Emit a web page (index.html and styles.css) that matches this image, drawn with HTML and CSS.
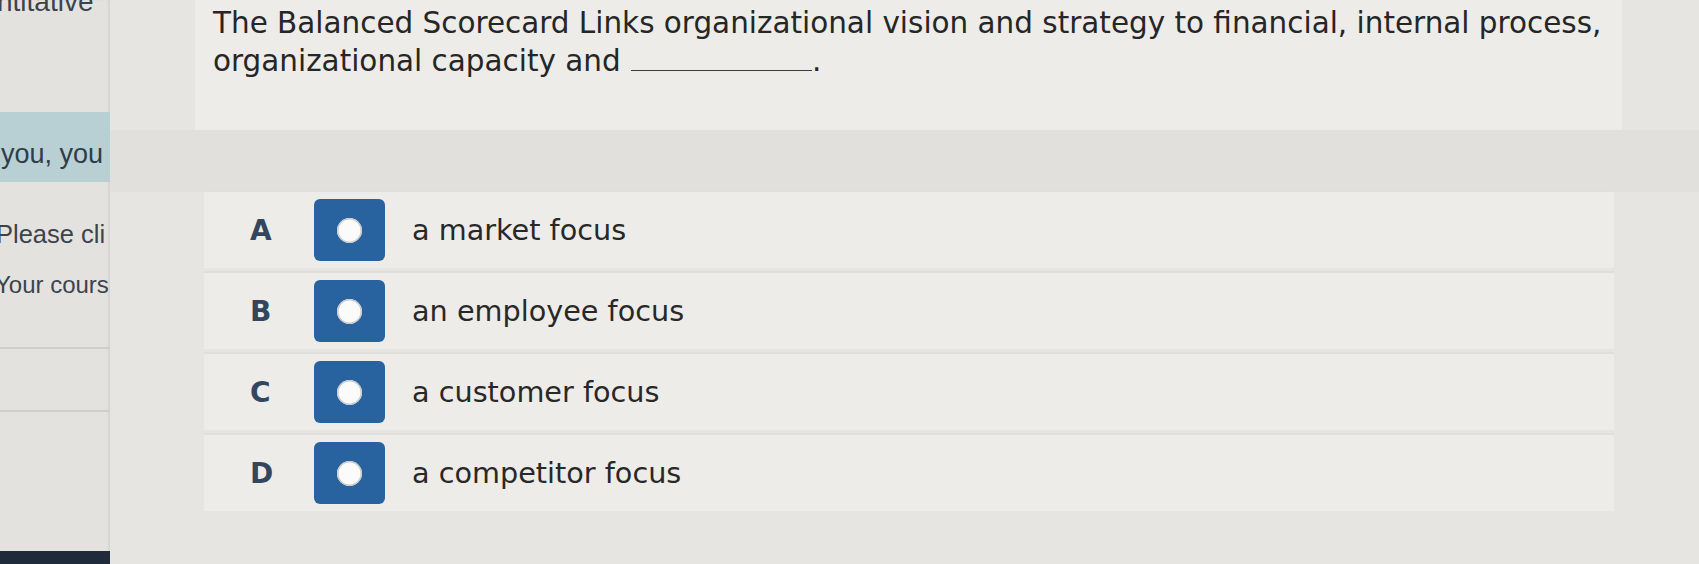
FILE: index.html
```html
<!DOCTYPE html>
<html lang="en">
<head>
<meta charset="utf-8">
<title>Balanced Scorecard question</title>
<link rel="stylesheet" href="styles.css">
</head>
<body>
<div class="app">
  <aside class="sidebar">
    <div class="sb-top">ntitative</div>
    <div class="sb-band"><span class="sb-band-text">you, you</span></div>
    <div class="sb-line sb-please">Please cli</div>
    <div class="sb-line sb-course">Your cours</div>
    <div class="sb-rule sb-rule1"></div>
    <div class="sb-rule sb-rule2"></div>
    <div class="sb-bottom"></div>
  </aside>
  <main class="main">
    <section class="question">
      <p class="q-text">The Balanced Scorecard Links organizational vision and strategy to financial, internal process, organizational capacity and <span class="blank"></span>.</p>
    </section>
    <div class="band"></div>
    <ul class="options">
      <li class="option">
        <span class="opt-letter">A</span>
        <span class="radio"><span class="dot"></span></span>
        <span class="opt-text">a market focus</span>
      </li>
      <li class="option">
        <span class="opt-letter">B</span>
        <span class="radio"><span class="dot"></span></span>
        <span class="opt-text">an employee focus</span>
      </li>
      <li class="option">
        <span class="opt-letter">C</span>
        <span class="radio"><span class="dot"></span></span>
        <span class="opt-text">a customer focus</span>
      </li>
      <li class="option">
        <span class="opt-letter">D</span>
        <span class="radio"><span class="dot"></span></span>
        <span class="opt-text">a competitor focus</span>
      </li>
    </ul>
  </main>
</div>
</body>
</html>
```
FILE: styles.css
```css
html, body {
  margin: 0;
  padding: 0;
}
body {
  width: 1699px;
  height: 564px;
  overflow: hidden;
  background: #e5e4e0;
  font-family: "DejaVu Sans", Verdana, sans-serif;
}
.app {
  display: grid;
  grid-template-columns: 110px 1fr;
  height: 564px;
}

/* Sidebar */
.sidebar {
  display: flex;
  flex-direction: column;
  background: #e3e2de;
  overflow: hidden;
  font-family: "Liberation Sans", Arial, sans-serif;
  color: #3b4350;
  white-space: nowrap;
  box-shadow: inset -2px 0 2px rgba(0,0,0,0.06);
}
.sb-top {
  font-size: 28px;
  line-height: 30px;
  margin-top: -13px;
  margin-left: -3px;
}
.sb-band {
  margin-top: 95px;
  height: 70px;
  background: #b8d0d3;
  display: flex;
  align-items: flex-end;
  padding-bottom: 13px;
  box-sizing: border-box;
}
.sb-band-text {
  font-size: 27px;
  line-height: 30px;
  margin-left: 1px;
  color: #2f3d4a;
}
.sb-line {
  font-size: 25.5px;
  line-height: 30px;
}
.sb-please {
  margin-top: 37px;
  margin-left: -4px;
}
.sb-course {
  margin-top: 21px;
  margin-left: -5px;
  font-size: 24px;
}
.sb-rule {
  height: 2px;
  background: #cfcecb;
}
.sb-rule1 {
  margin-top: 47px;
}
.sb-rule2 {
  margin-top: 61px;
}
.sb-bottom {
  margin-top: auto;
  height: 13px;
  background: #1f2b3b;
}

/* Main */
.main {
  display: flex;
  flex-direction: column;
  background: #e6e5e1;
}
.question {
  margin-left: 85px;
  width: 1427px;
  height: 130px;
  box-sizing: border-box;
  padding: 4px 10px 0 18px;
  background: #edece8;
}
.q-text {
  margin: 0;
  font-size: 29.45px;
  line-height: 38px;
  color: #262626;
}
.blank {
  display: inline-block;
  width: 181px;
  margin-left: 1px;
  border-bottom: 1.5px solid #3a3a3a;
  vertical-align: baseline;
}
.band {
  height: 62px;
  background: #e1e0dc;
}
.options {
  list-style: none;
  margin: 0 0 0 94px;
  padding: 0;
  width: 1410px;
  display: flex;
  flex-direction: column;
  gap: 5px;
}
.option {
  height: 76px;
  display: flex;
  align-items: center;
  background: #edece9;
  box-shadow: 0 -2px 0 #e0dfdb;
}
.opt-letter {
  width: 48px;
  margin-left: 46px;
  font-weight: bold;
  font-size: 28px;
  color: #34465d;
}
.radio {
  width: 71px;
  height: 62px;
  border-radius: 6px;
  background: #28639f;
  display: flex;
  align-items: center;
  justify-content: center;
  margin-left: 16px;
}
.dot {
  width: 25px;
  height: 25px;
  border-radius: 50%;
  background: #fbfbfb;
  box-shadow: inset 0 0 0 1.5px #c9c9c9;
}
.opt-text {
  margin-left: 27px;
  font-size: 28.7px;
  color: #282828;
}
```
